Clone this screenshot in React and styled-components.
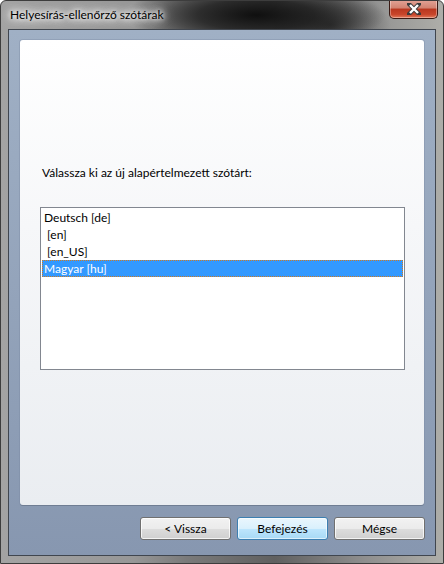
import React, { useState } from 'react'
import styled, { createGlobalStyle } from 'styled-components'

const GlobalStyle = createGlobalStyle`
    html, body {
        margin: 0;
        padding: 0;
        background: #ffffff;
    }
    * {
        box-sizing: border-box;
    }
`

const Window = styled.div`
    width: 444px;
    height: 564px;
    display: flex;
    flex-direction: column;
    padding: 0 7px 7px 7px;
    border: 1px solid #3d3d3d;
    border-radius: 6px 6px 0 0;
    background:
        radial-gradient(ellipse 130px 34px at 255px 14px, rgba(8,8,8,.92) 0%, rgba(15,15,15,.7) 45%, rgba(20,20,20,0) 100%),
        radial-gradient(ellipse 60px 30px at 330px 24px, rgba(20,20,20,.6) 0%, rgba(20,20,20,0) 100%),
        linear-gradient(90deg, #a3a3a3 0%, #979797 30%, #7a7a7a 42%, #606060 62%, #8e8e8e 82%, #aeaea9 100%);
    font-family: "Lato", "Noto Sans", sans-serif;
    font-size: 12px;
    color: #000;
    position: relative;
    overflow: hidden;
`

const TitleBar = styled.div`
    height: 28px;
    display: flex;
    align-items: flex-start;
    justify-content: space-between;
`

const Title = styled.div`
    margin-top: 6px;
    padding: 0 2px;
    font-size: 12px;
    color: #000;
    text-shadow: 0 0 8px #fff, 0 0 10px #fff, 0 0 14px #fff, 0 0 4px #fff;
`

const CloseButton = styled.div`
    width: 49px;
    height: 19px;
    margin-right: -2px;
    margin-top: -1px;
    border: 1px solid #3a1a14;
    border-top: none;
    border-radius: 0 0 5px 5px;
    display: flex;
    align-items: center;
    justify-content: center;
    background: linear-gradient(180deg, #e3a497 0%, #d28270 45%, #b9371f 50%, #c8452a 80%, #e27a5a 100%);
    box-shadow: inset 0 0 0 1px rgba(255,255,255,.35);
`

const Client = styled.div`
    flex: 1;
    display: flex;
    flex-direction: column;
    border: 1px solid #40464f;
    background: linear-gradient(180deg, #a0b0c5 0%, #8797b0 100%);
`

const Panel = styled.div`
    margin: 10px 11px 0 11px;
    height: 465px;
    display: flex;
    flex-direction: column;
    padding: 125px 20px 0 20px;
    border-radius: 3px;
    background: linear-gradient(180deg, #ffffff 0%, #f6f7f9 40%, #eaedf1 100%);
    box-shadow: 0 1px 0 #6f7d93, 0 0 0 1px rgba(120,135,160,.35);
`

const Label = styled.div`
    margin-left: 2px;
    line-height: 16px;
    height: 16px;
`

const ListBox = styled.div`
    margin-top: 26px;
    width: 365px;
    height: 163px;
    border: 1px solid #828790;
    background: #fff;
    padding: 1px 1px 0 1px;
`

const Item = styled.div`
    height: 17px;
    white-space: pre;
    color: ${p => (p.$selected ? '#fff' : '#000')};
    background: ${p => (p.$selected ? '#3399ff' : 'transparent')};
    border: ${p => (p.$selected ? '1px dotted #d07a20' : 'none')};
    line-height: ${p => (p.$selected ? '15px' : '17px')};
    padding-left: ${p => (p.$selected ? '1px' : '2px')};
`

const ButtonRow = styled.div`
    display: flex;
    justify-content: flex-end;
    gap: 6px;
    padding: 12px 10px 0 0;
`

const Button = styled.button`
    width: 91px;
    height: 23px;
    font-family: inherit;
    font-size: 12px;
    color: #000;
    padding: 0;
    border-radius: 3px;
    border: 1px solid ${p => (p.$default ? '#3c7fb1' : '#707070')};
    background: ${p =>
        p.$default
            ? 'linear-gradient(180deg, #eaf6fd 0%, #d9f0fc 50%, #bee6fd 51%, #a7d9f5 100%)'
            : 'linear-gradient(180deg, #f2f2f2 0%, #ebebeb 50%, #dddddd 51%, #cfcfcf 100%)'};
    box-shadow: inset 0 0 0 1px ${p => (p.$default ? 'rgba(255,255,255,.6)' : 'rgba(255,255,255,.75)')};
    cursor: default;
`

const items = ['Deutsch [de]', ' [en]', ' [en_US]', 'Magyar [hu]']

export default function App() {
    const [selected, setSelected] = useState(3)

    return (
        <>
            <GlobalStyle />
            <Window>
                <TitleBar>
                    <Title>Helyesírás-ellenőrző szótárak</Title>
                    <CloseButton>
                        <svg width="14" height="12" viewBox="0 0 14 12">
                            <path
                                d="M2 1 L12 11 M12 1 L2 11"
                                stroke="#3b3b3b"
                                strokeWidth="4.2"
                                fill="none"
                                strokeLinecap="square"
                            />
                            <path
                                d="M3 2 L11 10 M11 2 L3 10"
                                stroke="#ffffff"
                                strokeWidth="2.4"
                                fill="none"
                            />
                        </svg>
                    </CloseButton>
                </TitleBar>
                <Client>
                    <Panel>
                        <Label>Válassza ki az új alapértelmezett szótárt:</Label>
                        <ListBox>
                            {items.map((text, i) => (
                                <Item key={i} $selected={i === selected} onClick={() => setSelected(i)}>
                                    {text}
                                </Item>
                            ))}
                        </ListBox>
                    </Panel>
                    <ButtonRow>
                        <Button>&lt; Vissza</Button>
                        <Button $default>Befejezés</Button>
                        <Button>Mégse</Button>
                    </ButtonRow>
                </Client>
            </Window>
        </>
    )
}
